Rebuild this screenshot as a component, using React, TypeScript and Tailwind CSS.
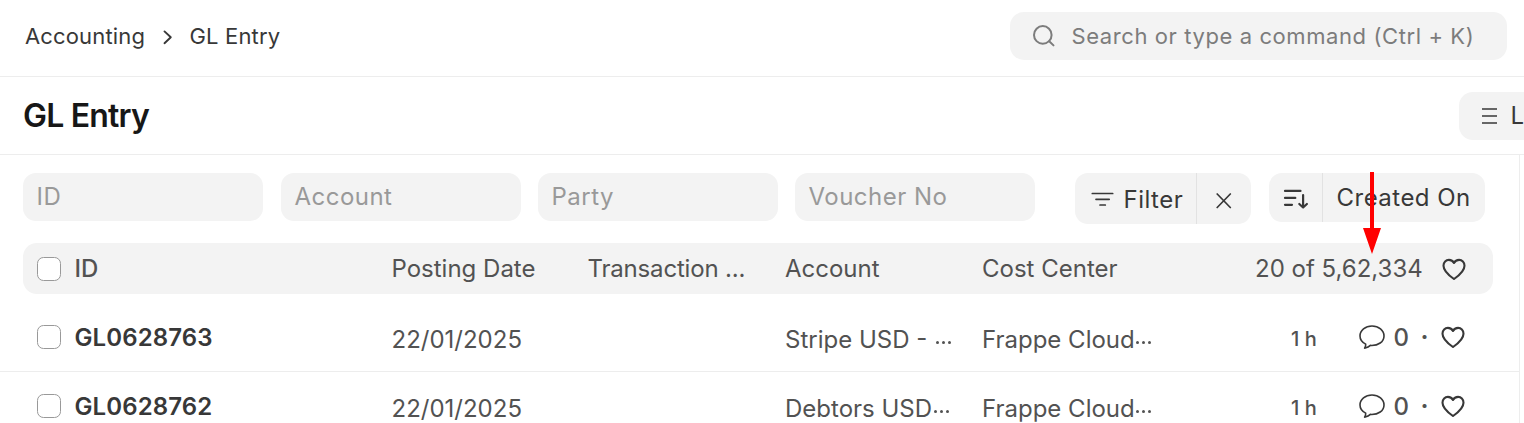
const filters = [
  { label: "ID", gap: "" },
  { label: "Account", gap: "ml-[18px]" },
  { label: "Party", gap: "ml-[17px]" },
  { label: "Voucher No", gap: "ml-[17px]" },
];

const rows = [
  { id: "GL0628763", date: "22/01/2025", account: "Stripe USD -\u00a0", center: "Frappe Cloud" },
  { id: "GL0628762", date: "22/01/2025", account: "Debtors USD", center: "Frappe Cloud" },
];

function Heart() {
  return (
    <svg className="h-6 w-6 shrink-0" viewBox="0 0 24 24" fill="none" stroke="#383838" strokeWidth="2.100" strokeLinejoin="round">
      <path d="M12 22C8.800 19.700 1.500 14.700 1.500 8.700C1.500 5.300 4 2.900 6.900 2.900C9.100 2.900 11 4 12 6C13 4 14.900 2.900 17.100 2.900C20 2.900 22.500 5.300 22.500 8.700C22.500 14.700 15.200 19.700 12 22Z" />
    </svg>
  );
}

function Comment() {
  return (
    <svg className="h-6 w-[26px] shrink-0" viewBox="0 0 26 24" fill="none" stroke="#383838" strokeWidth="1.600" strokeLinejoin="round">
      <path d="M13 1C6.300 1 1 5.300 1 10.900C1 14.300 3 17.200 6.700 19.100C6.900 20.800 6.300 22 5.600 23.100C8.300 22.600 10.300 21.600 11.400 20.400C19.300 20.900 25 16.700 25 10.900C25 5.300 19.700 1 13 1Z" />
    </svg>
  );
}

function Checkbox() {
  return <span className="h-6 w-6 shrink-0 rounded-[6.500px] border border-[#999999] bg-white" />;
}

function Clipped({ text }: { text: string }) {
  return (
    <span className="flex items-center whitespace-nowrap pt-1.5">
      {text}
      <span className="flex items-center gap-[3px] pl-[1.500px] pt-[4px]">
        <i className="h-[3px] w-[3px] rounded-full bg-[#525252]" />
        <i className="h-[3px] w-[3px] rounded-full bg-[#525252]" />
        <i className="h-[3px] w-[3px] rounded-full bg-[#525252]" />
      </span>
    </span>
  );
}

export default function App() {
  return (
    <div className="relative h-[423px] w-[1524px] overflow-hidden bg-white font-['Inter',sans-serif] text-2xl text-[#525252]">
      <header className="flex h-[77px] items-center justify-between border-b border-[#ededed] pb-1 pl-[25px] pr-[17px]">
        <nav className="flex items-center pt-0.5 text-[22px] tracking-[0.150px] text-[#383838]">
          <span>Accounting</span>
          <svg className="ml-[17.500px] mr-[17px] h-4 w-[10px]" viewBox="0 0 10 16" fill="none" stroke="#383838" strokeWidth="1.900" strokeLinecap="round" strokeLinejoin="round">
            <path d="M1.500 2.400L7.800 8.200L1.500 14.200" />
          </svg>
          <span>GL Entry</span>
        </nav>
        <div className="flex h-12 w-[497px] items-center whitespace-nowrap rounded-[14px] bg-[#f3f3f3] pl-[23px] text-[22px] tracking-[0.590px] text-[#7c7c7c]">
          <svg className="mr-[16.500px] h-[22px] w-[22px] shrink-0" viewBox="0 0 22 22" fill="none" stroke="#7c7c7c" strokeWidth="2" strokeLinecap="round">
            <circle cx="9.800" cy="9.900" r="8.800" />
            <path d="M16.200 16.200L20.500 20.400" />
          </svg>
          <span className="pt-0.5">Search or type a command (Ctrl + K)</span>
        </div>
      </header>

      <section className="flex h-[78px] items-center justify-between border-b border-[#ededed] pl-[23px]">
        <h1 className="pt-px text-[32px] font-semibold leading-none tracking-[-0.800px] text-[#171717]">GL Entry</h1>
        <div className="flex h-12 w-[65px] items-center rounded-l-[14px] bg-[#f3f3f3] pl-[23px] text-[#383838]">
          <svg className="mr-[13.500px] h-4 w-[15px] shrink-0" viewBox="0 0 15 16" stroke="#383838" strokeWidth="1.500">
            <path d="M0 1H15M0 8H15M0 14.900H15" />
          </svg>
          <span>L</span>
        </div>
      </section>

      <main className="h-[268px] w-[1520px] border-r border-[#ededed]">
        <div className="flex h-[88px] items-start pl-[23px] pt-[18px] tracking-[0.480px]">
          {filters.map((f) => (
            <div key={f.label} className={"flex h-12 w-[240px] shrink-0 items-center rounded-[13px] bg-[#f3f3f3] pl-[13.500px] text-[#999999] " + f.gap}>
              {f.label}
            </div>
          ))}
          <div className="ml-[40px] flex h-[51px] w-[176px] shrink-0 rounded-[13px] bg-[#f3f3f3] text-[#383838]">
            <div className="flex w-[122px] items-center border-r border-[#e2e2e2] pl-[16px] pt-[3px]">
              <svg className="mr-[9.500px] h-4 w-[23px] shrink-0" viewBox="0 0 23 16" stroke="#383838" strokeWidth="1.700" strokeLinecap="round">
                <path d="M1.300 1.500H21.700M5 7.300H18.200M9 13H14.300" />
              </svg>
              <span className="font-[430]">Filter</span>
            </div>
            <div className="flex flex-1 items-center justify-center pt-[4px]">
              <svg className="h-4 w-4" viewBox="0 0 16 16" stroke="#383838" strokeWidth="1.700" strokeLinecap="round">
                <path d="M1.200 1L14.300 14.500M14.300 1L1.200 14.500" />
              </svg>
            </div>
          </div>
          <div className="ml-[18px] flex h-[49px] w-[216px] shrink-0 rounded-[13px] bg-[#f3f3f3] text-[#383838]">
            <div className="flex w-[54px] items-center border-r border-[#e2e2e2] pl-[13.500px] pt-[3px]">
              <svg className="h-5 w-[26px]" viewBox="0 0 26 20" fill="none" stroke="#383838" strokeWidth="2.200" strokeLinecap="round" strokeLinejoin="round">
                <path d="M2 1.900H17.500M2 8.900H12.300M2 15.800H9M20.100 6V18.500M16.300 15L20.100 18.500L23.900 15" />
              </svg>
            </div>
            <span className="flex items-center whitespace-nowrap pl-[13.500px]">Created On</span>
          </div>
        </div>

        <div className="ml-[23px] grid h-[51px] w-[1470px] grid-cols-[51.500px_317px_197px_196.500px_197px_1fr] items-center rounded-[14px] bg-[#f3f3f3]">
          <span className="flex pl-[14px]"><Checkbox /></span>
          <span className="font-medium">ID</span>
          <span>Posting Date</span>
          <span className="-ml-px tracking-[-0.180px]">Transaction ...</span>
          <span>Account</span>
          <span className="flex items-center whitespace-nowrap">
            <span className="w-[273px]">Cost Center</span>
            <span className="mr-[19px]">20 of 5,62,334</span>
            <Heart />
          </span>
        </div>

        <div className="pt-[9px]">
          {rows.map((r) => (
            <div key={r.id} className="grid h-[69px] grid-cols-[74.500px_317px_197px_196.500px_197px_1fr] items-center border-b border-[#ededed]">
              <span className="flex pl-[37px]"><Checkbox /></span>
              <span className="pt-0.5 font-semibold tracking-[0.100px] text-[#383838]">{r.id}</span>
              <span className="pt-1.5">{r.date}</span>
              <span />
              <Clipped text={r.account} />
              <span className="flex items-center">
                <span className="w-[309px]"><Clipped text={r.center} /></span>
                <span className="w-[67.500px] pt-[3px] text-xl font-[450]">1 h</span>
                <Comment />
                <span className="ml-[9px] w-[27px] pt-px font-[450]">0</span>
                <span className="w-[20.500px] font-bold">·</span>
                <Heart />
              </span>
            </div>
          ))}
        </div>
      </main>

      <svg className="absolute left-[1362px] top-[172px] h-[82px] w-5" viewBox="0 0 20 82" fill="#ff0000">
        <path d="M8 0H12V56H19L10 82L1 56H8Z" />
      </svg>
    </div>
  );
}
